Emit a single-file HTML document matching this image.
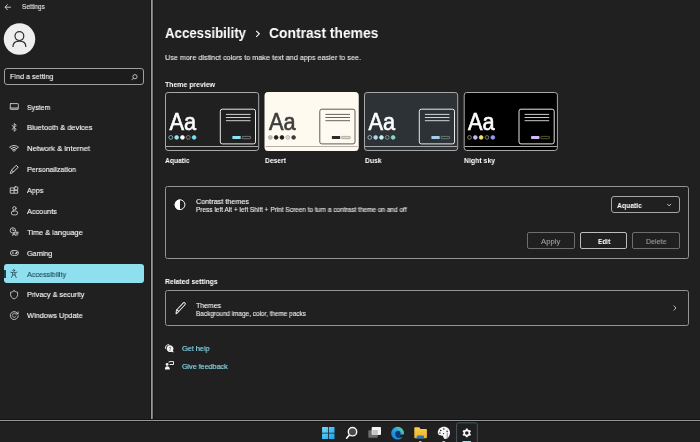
<!DOCTYPE html>
<html lang="en">
<head>
<meta charset="utf-8">
<title>Settings</title>
<style>
*{box-sizing:border-box;margin:0;padding:0}
html,body{width:700px;height:442px;overflow:hidden;background:#202020}
body{position:relative;font-family:"Liberation Sans",sans-serif;color:#fff;font-size:8px}
.a{position:absolute}
.t{position:absolute;white-space:nowrap;line-height:1;transform-origin:0 50%;will-change:transform}
.ic{position:absolute;overflow:visible;will-change:transform}
.card{position:absolute;border:1px solid #949494;border-radius:2.5px}
.btn{position:absolute;border:1px solid #6e6e6e;border-radius:2px;height:17px;top:232px;width:48px}
</style>
</head>
<body>
<!-- window frame -->
<div class="a" style="left:150px;top:0;width:4px;height:420px;background:linear-gradient(to right,#161616 0,#161616 1px,#989898 1px,#989898 2px,#787878 2px,#787878 3px,#181818 3px,#181818 4px)"></div>
<div class="a" style="left:0;top:419px;width:700px;height:3px;background:linear-gradient(to bottom,#131313 0,#131313 1px,#999999 1px,#999999 2px,#131313 2px,#131313 3px)"></div>
<header>
<svg class="ic" style="left:4px;top:3px" width="8" height="8" viewBox="0 0 8 8"><path d="M3.6 1.4 L1 4.2 L3.6 7 M1 4.2 H6.9" fill="none" stroke="#d8d8d8" stroke-width="0.9"/></svg>
<div class="t" style="left:22px;top:4px;font-size:6.6px;color:#e4e4e4;transform:scaleX(0.9569);-webkit-text-stroke:0.1px #e4e4e4">Settings</div>
</header>
<nav>
<svg class="ic" style="left:3px;top:22px" width="34" height="34" viewBox="3 22 34 34"><circle cx="19.5" cy="39.05" r="15.75" fill="#eeeeee"/><circle cx="19.4" cy="36.1" r="4.4" fill="none" stroke="#2e2e2e" stroke-width="1.2"/><path d="M12.9 47 C12.9 42.6 15.6 41.2 19.4 41.2 C23.2 41.2 25.9 42.6 25.9 47" fill="none" stroke="#2e2e2e" stroke-width="1.2"/></svg>
<div class="a" style="left:4px;top:68px;width:140px;height:17px;border:1px solid #a0a0a0;border-radius:3px;background:#1c1c1c"></div>
<div class="t" style="left:9.6px;top:73px;font-size:7.9px;transform:scaleX(0.9161);-webkit-text-stroke:0.1px #fff">Find a setting</div>
<svg class="ic" style="left:131px;top:74px" width="7" height="7" viewBox="0 0 7 7"><circle cx="4" cy="2.7" r="2.1" fill="none" stroke="#e0e0e0" stroke-width="0.8"/><path d="M2.5 4.2 L0.5 6.2" stroke="#e0e0e0" stroke-width="0.8"/></svg>
<div class="a" style="left:4px;top:264px;width:140px;height:19px;border-radius:3px;background:#8fe0ee"></div>
<div class="a" style="left:4px;top:270px;width:2px;height:8px;background:#1e3e48"></div>
<div class="t" style="left:26.6px;top:104px;font-size:7.85px;transform:scaleX(0.8946);-webkit-text-stroke:0.1px #fff">System</div>
<div class="t" style="left:26.6px;top:124px;font-size:7.85px;transform:scaleX(0.9431);-webkit-text-stroke:0.1px #fff">Bluetooth &amp; devices</div>
<div class="t" style="left:26.6px;top:145px;font-size:7.85px;transform:scaleX(0.9763);-webkit-text-stroke:0.1px #fff">Network &amp; internet</div>
<div class="t" style="left:26.6px;top:166px;font-size:7.85px;transform:scaleX(0.9135);-webkit-text-stroke:0.1px #fff">Personalization</div>
<div class="t" style="left:26.6px;top:187px;font-size:7.85px;transform:scaleX(0.9167);-webkit-text-stroke:0.1px #fff">Apps</div>
<div class="t" style="left:26.6px;top:208px;font-size:7.85px;transform:scaleX(0.9267);-webkit-text-stroke:0.1px #fff">Accounts</div>
<div class="t" style="left:26.6px;top:229px;font-size:7.85px;transform:scaleX(0.9438);-webkit-text-stroke:0.1px #fff">Time &amp; language</div>
<div class="t" style="left:26.6px;top:250px;font-size:7.85px;transform:scaleX(0.9210);-webkit-text-stroke:0.1px #fff">Gaming</div>
<div class="t" style="left:26.6px;top:271px;font-size:7.85px;color:#1d4450;transform:scaleX(0.9153);-webkit-text-stroke:0.1px #1d4450">Accessibility</div>
<div class="t" style="left:26.6px;top:291px;font-size:7.85px;transform:scaleX(0.9191);-webkit-text-stroke:0.1px #fff">Privacy &amp; security</div>
<div class="t" style="left:26.6px;top:312px;font-size:7.85px;transform:scaleX(0.9393);-webkit-text-stroke:0.1px #fff">Windows Update</div>
<svg class="ic" style="left:8px;top:100px" width="14" height="224" viewBox="8 100 14 224" fill="none" stroke="#d6d6d6" stroke-width="0.85" stroke-linecap="round" stroke-linejoin="round">
<g><rect x="10.3" y="103.6" width="8" height="5.7" rx="0.5"/><path d="M10.5 107.7 H18.1 V108.9 H10.5 Z" fill="#5a5a5a" stroke-width="0.5"/></g>
<path d="M12 125.4 L16.3 129.4 L14.2 131.3 V123.5 L16.3 125.4 L12 129.4"/>
<g stroke-width="0.95"><path d="M9.85 147.1 A6 6 0 0 1 18.25 147.1"/><path d="M11.3 148.5 A4 4 0 0 1 16.8 148.5"/><path d="M12.65 149.9 A2 2 0 0 1 15.45 149.9"/><path d="M9.85 147.1 L14.05 151.4 L18.25 147.1" stroke-width="0.55"/><circle cx="14.05" cy="151" r="0.5" fill="#d6d6d6" stroke="none"/></g>
<g stroke-width="1"><path d="M16.5 165.6 L18.2 167.2 L13.4 172 L11.8 170.4 Z"/><path d="M11.8 170.4 C10.6 171 10.6 172.4 10.2 173.4 C11.4 173.2 12.8 173.2 13.4 172"/></g>
<g><path d="M10.6 187.9 H14.1 V193.2 H10.6 Z M10.6 190.4 H17.7 V193.2 H14.1"/><rect x="14.6" y="186.9" width="3.2" height="3.1" rx="0.4" transform="rotate(8 16.2 188.4)"/></g>
<g><circle cx="14.4" cy="208.3" r="1.7"/><rect x="11.3" y="211" width="6.3" height="3.9" rx="1.9"/></g>
<g><circle cx="12.9" cy="230.4" r="2.7"/><path d="M12.9 229 V230.5 H14"/><path d="M12.6 235.6 L14 232.4 L15.4 235.6 M13.1 234.6 H14.9" stroke-width="0.7"/><path d="M15.6 232.4 H18.4 M17 231.6 V235.6 M15.9 233.9 H18.1" stroke-width="0.7"/></g>
<g><rect x="10.4" y="250.6" width="8" height="4.8" rx="2.4"/><path d="M12.2 253 H13.6 M12.9 252.3 V253.7" stroke-width="0.6"/><circle cx="15.9" cy="253.6" r="0.35" fill="#d6d6d6"/><circle cx="16.7" cy="252.4" r="0.35" fill="#d6d6d6"/></g>
<g stroke="#28525e"><circle cx="13.8" cy="270.4" r="0.9"/><path d="M10.6 272.2 C12.6 272.9 15 272.9 17 272.2"/><path d="M12.6 272.8 V275 L11.4 277.6 M15 272.8 V275 L16.2 277.6 M12.6 275 H15"/></g>
<path d="M14.1 290.8 C13 291.7 11.8 292.1 10.6 292.2 V294.6 C10.6 296.8 12 298.2 14.1 298.9 C16.2 298.2 17.6 296.8 17.6 294.6 V292.2 C16.4 292.1 15.2 291.7 14.1 290.8 Z"/>
<g><path d="M17.9 313.8 A4 4 0 1 0 18.3 315.8"/><path d="M18.1 311.9 V313.9 H16.1"/><path d="M16 314.2 A2 2 0 1 0 16.1 316.4" stroke-width="0.7"/></g>
</svg>
</nav>
<main>
<div class="t" style="left:164.8px;top:25px;font-size:15px;font-weight:bold;transform:scaleX(0.8831)">Accessibility</div>
<svg class="ic" style="left:254px;top:29px" width="8" height="10" viewBox="254 29 8 10"><path d="M256.2 30.8 L259.3 33.8 L256.2 36.8" fill="none" stroke="#fff" stroke-width="1.1"/></svg>
<div class="t" style="left:269px;top:25px;font-size:15px;font-weight:bold;transform:scaleX(0.9243)">Contrast themes</div>
<div class="t" style="left:165px;top:54px;font-size:7.8px;color:#f0f0f0;transform:scaleX(0.9286);-webkit-text-stroke:0.1px #f0f0f0">Use more distinct colors to make text and apps easier to see.</div>
<div class="t" style="left:165.2px;top:81px;font-size:7.8px;font-weight:bold;transform:scaleX(0.8874)">Theme preview</div>
<svg class="ic" style="left:160px;top:88px" width="405" height="68" viewBox="160 88 405 68" font-family="Liberation Sans, sans-serif">
<g>
<rect x="165.5" y="92.5" width="93.2" height="58" rx="2.6" fill="#202020" stroke="#a8a8a8" stroke-width="1"/>
<path d="M166.0 146.5 H258.2" stroke="#a8a8a8" stroke-width="1"/>
<text x="169.4" y="129.6" font-size="23.2" fill="#ffffff" stroke="#ffffff" stroke-width="0.6" textLength="26.6" lengthAdjust="spacingAndGlyphs">Aa</text>
<circle cx="170.80" cy="137.4" r="1.9" fill="#202020" stroke="#8ee3f0" stroke-width="0.7"/>
<circle cx="176.63" cy="137.4" r="1.9" fill="#9ae4f0" stroke="#9ae4f0" stroke-width="0.7"/>
<circle cx="182.46" cy="137.4" r="1.9" fill="#ffffff" stroke="#ffffff" stroke-width="0.7"/>
<circle cx="188.29" cy="137.4" r="1.9" fill="#202020" stroke="#a0a0a0" stroke-width="0.7"/>
<circle cx="194.12" cy="137.4" r="1.9" fill="#75e2f4" stroke="#75e2f4" stroke-width="0.7"/>
<rect x="220.3" y="109.2" width="35.2" height="34.7" rx="2" fill="none" stroke="#ffffff" stroke-width="0.9"/>
<path d="M225.9 114.4 H250.5" stroke="#ffffff" stroke-width="0.8"/>
<path d="M225.9 117.5 H250.5" stroke="#ffffff" stroke-width="0.8"/>
<path d="M225.9 120.7 H250.5" stroke="#ffffff" stroke-width="0.8"/>
<rect x="232.4" y="136.1" width="8.3" height="2.8" rx="0.5" fill="#8ee3f0"/>
<rect x="242.2" y="136.4" width="8.5" height="2.3" rx="0.5" fill="none" stroke="#a8a8a8" stroke-width="0.6"/>
</g>
<g>
<rect x="265.0" y="92.5" width="93.2" height="58" rx="2.6" fill="#fffaef" stroke="#fffaef" stroke-width="1"/>
<path d="M265.5 146.5 H357.7" stroke="#b5b1a8" stroke-width="1"/>
<text x="268.9" y="129.6" font-size="23.2" fill="#3d3d3d" stroke="#3d3d3d" stroke-width="0.6" textLength="26.6" lengthAdjust="spacingAndGlyphs">Aa</text>
<circle cx="270.30" cy="137.4" r="1.9" fill="#c4bfb4" stroke="#a9a59b" stroke-width="0.7"/>
<circle cx="276.13" cy="137.4" r="1.9" fill="#1f1f1f" stroke="#1f1f1f" stroke-width="0.7"/>
<circle cx="281.96" cy="137.4" r="1.9" fill="#1a1a1a" stroke="#1a1a1a" stroke-width="0.7"/>
<circle cx="287.79" cy="137.4" r="1.9" fill="#e2ddd2" stroke="#a9a59b" stroke-width="0.7"/>
<circle cx="293.62" cy="137.4" r="1.9" fill="#3d3d3d" stroke="#3d3d3d" stroke-width="0.7"/>
<rect x="319.8" y="109.2" width="35.2" height="34.7" rx="2" fill="none" stroke="#4a4a4a" stroke-width="0.9"/>
<path d="M325.4 114.4 H350.0" stroke="#3d3d3d" stroke-width="0.8"/>
<path d="M325.4 117.5 H350.0" stroke="#3d3d3d" stroke-width="0.8"/>
<path d="M325.4 120.7 H350.0" stroke="#3d3d3d" stroke-width="0.8"/>
<rect x="331.9" y="136.1" width="8.3" height="2.8" rx="0.5" fill="#2a2a2a"/>
<rect x="341.7" y="136.4" width="8.5" height="2.3" rx="0.5" fill="#ded9ce" stroke="#8a877f" stroke-width="0.6"/>
</g>
<g>
<rect x="364.5" y="92.5" width="93.2" height="58" rx="2.6" fill="#2d3236" stroke="#a8a8a8" stroke-width="1"/>
<path d="M365.0 146.5 H457.2" stroke="#a8a8a8" stroke-width="1"/>
<text x="368.4" y="129.6" font-size="23.2" fill="#ffffff" stroke="#ffffff" stroke-width="0.6" textLength="26.6" lengthAdjust="spacingAndGlyphs">Aa</text>
<circle cx="369.80" cy="137.4" r="1.9" fill="#2d3236" stroke="#c8d4dc" stroke-width="0.7"/>
<circle cx="375.63" cy="137.4" r="1.9" fill="#b4d6f0" stroke="#b4d6f0" stroke-width="0.7"/>
<circle cx="381.46" cy="137.4" r="1.9" fill="#c9f4f0" stroke="#c9f4f0" stroke-width="0.7"/>
<circle cx="387.29" cy="137.4" r="1.9" fill="#2d3236" stroke="#b0b0b0" stroke-width="0.7"/>
<circle cx="393.12" cy="137.4" r="1.9" fill="#86d8d0" stroke="#86d8d0" stroke-width="0.7"/>
<rect x="419.3" y="109.2" width="35.2" height="34.7" rx="2" fill="none" stroke="#ffffff" stroke-width="0.9"/>
<path d="M424.9 114.4 H449.5" stroke="#ffffff" stroke-width="0.8"/>
<path d="M424.9 117.5 H449.5" stroke="#ffffff" stroke-width="0.8"/>
<path d="M424.9 120.7 H449.5" stroke="#ffffff" stroke-width="0.8"/>
<rect x="431.4" y="136.1" width="8.3" height="2.8" rx="0.5" fill="#a6cdec"/>
<rect x="441.2" y="136.4" width="8.5" height="2.3" rx="0.5" fill="none" stroke="#8aa89a" stroke-width="0.6"/>
</g>
<g>
<rect x="464.2" y="92.5" width="93.2" height="58" rx="2.6" fill="#000000" stroke="#a8a8a8" stroke-width="1"/>
<path d="M464.7 146.5 H556.9" stroke="#a8a8a8" stroke-width="1"/>
<text x="468.1" y="129.6" font-size="23.2" fill="#ffffff" stroke="#ffffff" stroke-width="0.6" textLength="26.6" lengthAdjust="spacingAndGlyphs">Aa</text>
<circle cx="469.50" cy="137.4" r="1.9" fill="#101010" stroke="#a8a878" stroke-width="0.7"/>
<circle cx="475.33" cy="137.4" r="1.9" fill="#cdb4f5" stroke="#cdb4f5" stroke-width="0.7"/>
<circle cx="481.16" cy="137.4" r="1.9" fill="#f2e66a" stroke="#f2e66a" stroke-width="0.7"/>
<circle cx="486.99" cy="137.4" r="1.9" fill="#101010" stroke="#9a9a9a" stroke-width="0.7"/>
<circle cx="492.82" cy="137.4" r="1.9" fill="#9a94f2" stroke="#9a94f2" stroke-width="0.7"/>
<rect x="519.0" y="109.2" width="35.2" height="34.7" rx="2" fill="none" stroke="#ffffff" stroke-width="0.9"/>
<path d="M524.6 114.4 H549.2" stroke="#ffffff" stroke-width="0.8"/>
<path d="M524.6 117.5 H549.2" stroke="#ffffff" stroke-width="0.8"/>
<path d="M524.6 120.7 H549.2" stroke="#ffffff" stroke-width="0.8"/>
<rect x="531.1" y="136.1" width="8.3" height="2.8" rx="0.5" fill="#d2b8f6"/>
<rect x="540.9" y="136.4" width="8.5" height="2.3" rx="0.5" fill="none" stroke="#8c8c50" stroke-width="0.6"/>
</g>
</svg>
<div class="t" style="left:165.4px;top:157px;font-size:7.8px;font-weight:bold;transform:scaleX(0.8603)">Aquatic</div>
<div class="t" style="left:265px;top:157px;font-size:7.8px;font-weight:bold;transform:scaleX(0.8566)">Desert</div>
<div class="t" style="left:364.5px;top:157px;font-size:7.8px;font-weight:bold;transform:scaleX(0.8649)">Dusk</div>
<div class="t" style="left:464px;top:157px;font-size:7.8px;font-weight:bold;transform:scaleX(0.8862)">Night sky</div>
<section>
<div class="card" style="left:165px;top:186px;width:524px;height:73px"></div>
<svg class="ic" style="left:174px;top:199px" width="12" height="12" viewBox="174 199 12 12"><circle cx="180" cy="204.7" r="4.9" fill="none" stroke="#fff" stroke-width="1"/><path d="M180 199.4 A5.3 5.3 0 0 0 180 210 Z" fill="#fff"/></svg>
<div class="t" style="left:196px;top:198px;font-size:7.7px;transform:scaleX(0.9396);-webkit-text-stroke:0.1px #fff">Contrast themes</div>
<div class="t" style="left:196px;top:207px;font-size:6.5px;color:#ececec;transform:scaleX(0.9969);-webkit-text-stroke:0.1px #ececec">Press left Alt + left Shift + Print Screen to turn a contrast theme on and off</div>
<div class="a" style="left:611px;top:196px;width:69px;height:17px;border:1px solid #a6a6a6;border-radius:3px"></div>
<div class="t" style="left:617.2px;top:202px;font-size:7.8px;font-weight:bold;transform:scaleX(0.8708)">Aquatic</div>
<svg class="ic" style="left:666px;top:203px" width="7" height="5" viewBox="666 203 7 5"><path d="M667.3 203.9 L669.2 205.9 L671.1 203.9" fill="none" stroke="#e8e8e8" stroke-width="0.8"/></svg>
<div class="btn" style="left:527px"></div>
<div class="t" style="left:541.4px;top:238px;font-size:7.7px;color:#a2a2a2;transform:scaleX(0.9930);-webkit-text-stroke:0.1px #a2a2a2">Apply</div>
<div class="btn" style="left:580px;width:47px;border-color:#bcbcbc"></div>
<div class="t" style="left:597.8px;top:238px;font-size:7.7px;font-weight:bold;transform:scaleX(0.8396)">Edit</div>
<div class="btn" style="left:632px"></div>
<div class="t" style="left:646px;top:238px;font-size:7.7px;color:#a2a2a2;transform:scaleX(0.9220);-webkit-text-stroke:0.1px #a2a2a2">Delete</div>
</section>
<section>
<div class="t" style="left:165.2px;top:278px;font-size:7.6px;font-weight:bold;transform:scaleX(0.8968)">Related settings</div>
<div class="card" style="left:165px;top:290px;width:524px;height:36px"></div>
<svg class="ic" style="left:173px;top:301px" width="14" height="14" viewBox="173 301 14 14" fill="none" stroke="#f0f0f0" stroke-width="1" stroke-linejoin="round" stroke-linecap="round"><g transform="translate(180.2 308) rotate(-47)"><path d="M-3.6 -1.25 H5.6 A1.25 1.25 0 0 1 5.6 1.25 H-3.6 Z"/><path d="M-3.6 -1.25 C-5 -1 -6 0 -7 0.9 C-5.8 1.3 -4.6 1.3 -3.6 1.25"/></g></svg>
<div class="t" style="left:196.1px;top:302px;font-size:7.7px;transform:scaleX(0.8999);-webkit-text-stroke:0.1px #fff">Themes</div>
<div class="t" style="left:196.1px;top:311px;font-size:6.5px;color:#ececec;transform:scaleX(0.9811);-webkit-text-stroke:0.1px #ececec">Background image, color, theme packs</div>
<svg class="ic" style="left:672px;top:304px" width="6" height="8" viewBox="672 304 6 8"><path d="M673.6 305.6 L676 308 L673.6 310.4" fill="none" stroke="#e0e0e0" stroke-width="0.8"/></svg>
<svg class="ic" style="left:164px;top:343px" width="11" height="28" viewBox="164 343 11 28">
<path d="M165.5 348.4 C165.1 346 166.8 344.5 168.8 344.7" fill="none" stroke="#f4f4f4" stroke-width="1" stroke-linecap="round"/>
<path d="M170 345.3 A3.4 3.4 0 1 0 171.5 351.8 L173.7 352.5 L173 350.4 A3.4 3.4 0 0 0 170 345.3 Z" fill="#f6f6f6"/>
<path d="M169.2 347.8 C169.2 346.9 170.8 346.9 170.8 347.9 C170.8 348.6 170 348.7 170 349.5 M170 350.4 V350.5" fill="none" stroke="#2a2a2a" stroke-width="0.55" stroke-linecap="round"/>
<circle cx="167.1" cy="364.4" r="1.4" fill="#f6f6f6"/>
<path d="M164.9 369.4 C164.9 367.2 165.8 366.2 167.1 366.2 C168.7 366.2 169.8 367.2 169.9 369.4 Z" fill="#f6f6f6"/>
<path d="M169.2 361.6 H173.5 V364.5 H169.6" fill="none" stroke="#f4f4f4" stroke-width="0.95" stroke-linejoin="round"/>
<path d="M168.9 361.6 V362.6" stroke="#f4f4f4" stroke-width="0.8"/>
</svg>
<div class="t" style="left:181.9px;top:345px;font-size:7.8px;color:#8ce4f4;transform:scaleX(0.9327);-webkit-text-stroke:0.1px #8ce4f4">Get help</div>
<div class="t" style="left:181.9px;top:363px;font-size:7.8px;color:#8ce4f4;transform:scaleX(0.9149);-webkit-text-stroke:0.1px #8ce4f4">Give feedback</div>
</section>
</main>
<footer>
<svg class="ic" style="left:316px;top:421px" width="166" height="21" viewBox="316 421 166 21">
<defs>
<linearGradient id="gw" x1="0" y1="0" x2="1" y2="1"><stop offset="0" stop-color="#6fdcfa"/><stop offset="1" stop-color="#1c9dee"/></linearGradient>
<linearGradient id="ge" x1="0" y1="1" x2="1" y2="0"><stop offset="0" stop-color="#1874cc"/><stop offset="0.55" stop-color="#2aa6e6"/><stop offset="1" stop-color="#6fe07a"/></linearGradient>
<linearGradient id="gf" x1="0" y1="0" x2="0" y2="1"><stop offset="0" stop-color="#f9d04a"/><stop offset="1" stop-color="#efb22a"/></linearGradient>
</defs>
<g fill="url(#gw)"><path d="M322.1 426.9 H328 V432.7 H322.1 Z M328.8 426.9 H334.5 V432.7 H328.8 Z M322.1 433.4 H328 V439 H322.1 Z M328.8 433.4 H334.5 V439 H328.8 Z"/></g>
<g><circle cx="352.5" cy="431.7" r="4.2" fill="#4a4a4a" stroke="#f6f6f6" stroke-width="1.4"/><path d="M349.4 435 L346.6 438.2" stroke="#f6f6f6" stroke-width="1.6" stroke-linecap="round"/></g>
<g><rect x="368.3" y="430.2" width="9.4" height="7.5" rx="0.8" fill="#6c6c6c"/><rect x="371.7" y="426.9" width="9.3" height="8" rx="0.8" fill="#f4f4f4"/><rect x="372.4" y="430" width="5.4" height="4.9" fill="#c4c4c4"/></g>
<g><circle cx="397.6" cy="433.2" r="6.4" fill="url(#ge)"/><path d="M395.2 433.6 C395.2 431.6 396.8 430.6 398.4 430.8 C400 431 400.8 432.2 400.6 433.6 C400.4 434.6 399.6 434.8 399.4 435.6 C399.2 436.6 400 437.4 401.4 437.4 C399.8 438.4 397.4 438.2 396.2 436.8 C395.5 436 395.2 434.8 395.2 433.6 Z" fill="#0c3c74"/><path d="M399.6 434.5 H404.6 V436.7 C403.2 437.5 401.2 437.7 400.2 436.9 C399.4 436.3 399.3 435.3 399.6 434.5 Z" fill="#1e1e1e"/></g>
<g><path d="M414.3 428 Q414.3 427.2 415.1 427.2 H419.2 L420.6 428.9 H426.1 Q426.9 428.9 426.9 429.7 V437.4 Q426.9 438.2 426.1 438.2 H415.1 Q414.3 438.2 414.3 437.4 Z" fill="url(#gf)"/><path d="M416.8 438.4 V436.6 Q416.8 435.5 417.9 435.5 H422.9 Q424 435.5 424 436.6 V438.4 Z" fill="#1f78c8"/><rect x="419" y="441" width="2.6" height="1" fill="#b8b8b8"/></g>
<g><path d="M444 426.8 C447.6 426.8 450 429.4 450 432.6 C450 435.6 448.6 438.9 445.2 438.9 C443 438.9 443.8 436.6 442.6 435.8 C441.2 434.9 437.8 435.8 437.8 432.4 C437.8 429.2 440.6 426.8 444 426.8 Z" fill="#f6f6f6"/><circle cx="440.7" cy="430.5" r="0.8" fill="#222"/><circle cx="443.8" cy="429" r="0.8" fill="#222"/><circle cx="447.1" cy="431.2" r="0.8" fill="#222"/><circle cx="439.9" cy="433" r="0.7" fill="#222"/><circle cx="443.5" cy="433.6" r="0.7" fill="#222"/><path d="M447.2 432.4 V438.2" stroke="#9a9a9a" stroke-width="1.1"/><rect x="442.3" y="441" width="2.8" height="1" fill="#b8b8b8"/></g>
<g><path d="M456.6 442 V424.8 Q456.6 422.8 458.6 422.8 H475.3 Q477.3 422.8 477.3 424.8 V442" fill="#1d1f20" stroke="#48585e" stroke-width="1"/><g fill="#f6f6f6"><rect x="465.85" y="428.55" width="1.9" height="2" rx="0.3" transform="rotate(0 466.8 432.9)"/><rect x="465.85" y="428.55" width="1.9" height="2" rx="0.3" transform="rotate(60 466.8 432.9)"/><rect x="465.85" y="428.55" width="1.9" height="2" rx="0.3" transform="rotate(120 466.8 432.9)"/><rect x="465.85" y="428.55" width="1.9" height="2" rx="0.3" transform="rotate(180 466.8 432.9)"/><rect x="465.85" y="428.55" width="1.9" height="2" rx="0.3" transform="rotate(240 466.8 432.9)"/><rect x="465.85" y="428.55" width="1.9" height="2" rx="0.3" transform="rotate(300 466.8 432.9)"/></g><circle cx="466.8" cy="432.9" r="2.55" fill="none" stroke="#f6f6f6" stroke-width="1.6"/><rect x="462.5" y="441" width="8.5" height="1" fill="#a5dcea"/></g>
</svg>
</footer>
</body>
</html>
